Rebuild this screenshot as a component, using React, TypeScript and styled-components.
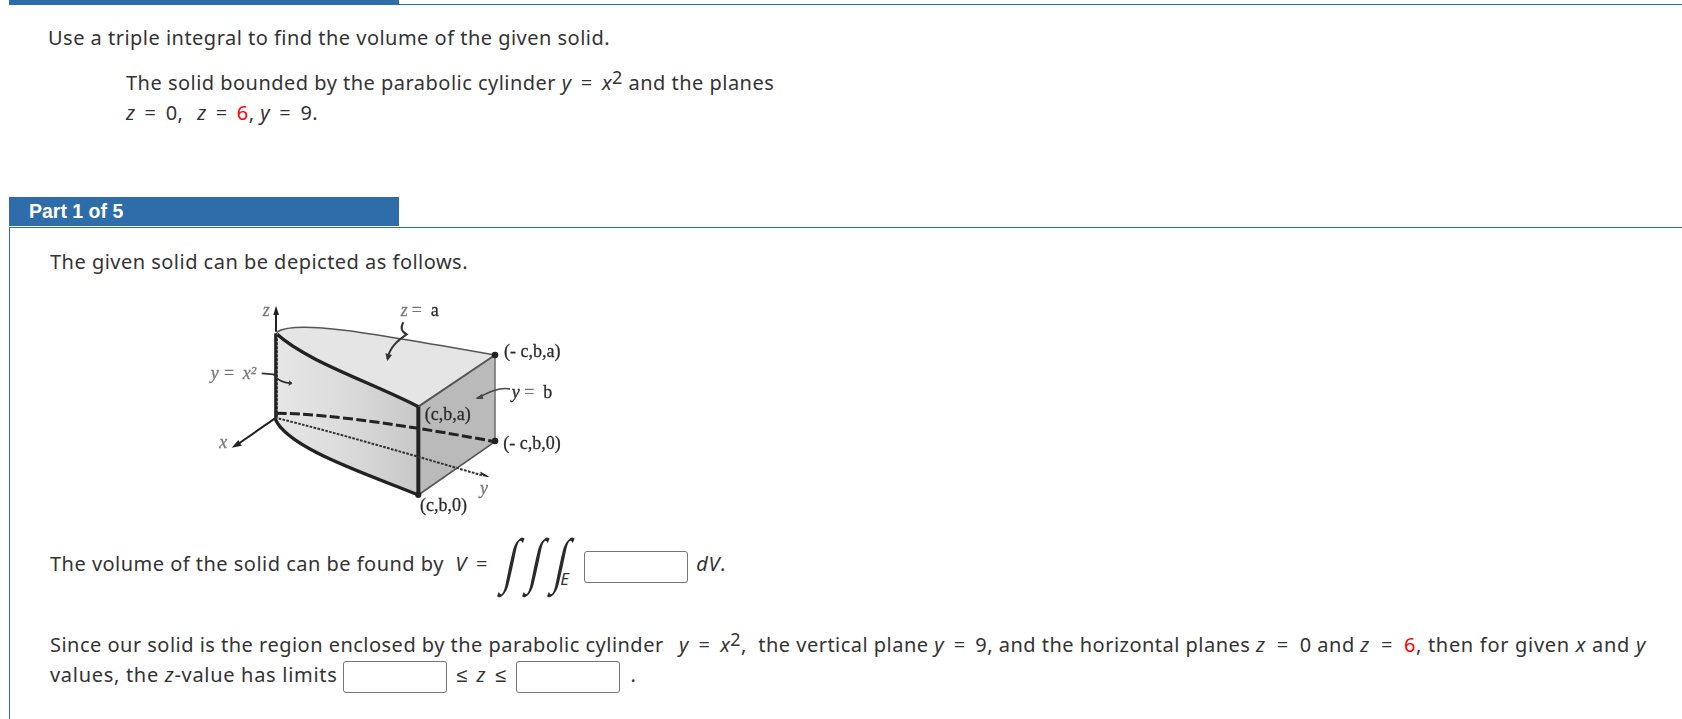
import styled, { createGlobalStyle } from 'styled-components';

const Blue = '#2e6da9';

const Global = createGlobalStyle`
  html, body { margin: 0; padding: 0; background: #fff; }
  body { font-family: "Noto Sans", Tahoma, sans-serif; font-size: 20px; letter-spacing: 0.48px; color: #333; overflow: hidden; }
`;

const Page = styled.div`
  padding-left: 9px;
  height: 719px;
  box-sizing: border-box;
`;

const Tab = styled.div<{ $top?: boolean }>`
  width: 390px;
  height: ${(p) => (p.$top ? '4px' : '29px')};
  box-sizing: border-box;
  padding-left: 20px;
  background: ${Blue};
  color: #fff;
  letter-spacing: 0;
  font: bold 19.5px/29px "Liberation Sans", Arial, sans-serif;
`;

const Rule = styled.div`
  height: 1px;
  background: ${Blue};
`;

const Prompt = styled.div`
  height: 192px;
  padding: 22px 0 0 39px;
  box-sizing: border-box;
`;

const Line = styled.div`
  line-height: 22px;
`;

const Problem = styled.div`
  margin: 19px 0 0 78px;
  line-height: 30px;
`;

const Power = styled.sup`
  font-size: 18px;
  line-height: 0;
  vertical-align: 6px;
`;

const Red = styled.span`
  color: #f00;
`;

const Op = styled.span<{ $gap?: number }>`
  margin: 0 ${(p) => p.$gap ?? 3.5}px;
`;

const Pause = styled.span<{ $size?: number }>`
  margin-right: ${(p) => p.$size ?? 8}px;
`;

const Part = styled.div`
  height: 492px;
  box-sizing: border-box;
  margin-top: 1px;
  padding: 23px 0 0 40px;
  border-top: 1px solid ${Blue};
  border-left: 1px solid ${Blue};
`;

const Figure = styled.svg`
  display: block;
  width: 400px;
  height: 245px;
  margin: 12px 0 0 140px;
`;

const Label = styled.text<{ $muted?: boolean; $italic?: boolean }>`
  font-family: "Liberation Serif", "Times New Roman", serif;
  font-size: 54px;
  letter-spacing: 0;
  font-style: ${(p) => (p.$italic ? 'italic' : 'normal')};
  fill: ${(p) => (p.$muted ? '#777' : '#2a2a2a')};
  stroke: ${(p) => (p.$muted ? '#777' : '#2a2a2a')};
  stroke-width: 0.8px;
`;

const Volume = styled.div`
  display: flex;
  align-items: flex-start;
  height: 62px;
  margin-top: 1px;
`;

const VolumeText = styled.div`
  line-height: 22px;
  margin-top: 22px;
`;

const Integrals = styled.div`
  position: relative;
  display: flex;
  width: 76px;
  height: 56px;
  margin: 0 8px 0 9px;
`;

const Integral = styled.span`
  width: 25px;
  text-align: center;
  font: italic 40px/56px "Liberation Serif", serif;
  color: #2a2a2a;
  transform: translateY(2px) skewX(-12deg) scaleY(1.52);
`;

const Sub = styled.span`
  position: absolute;
  left: 60px;
  top: 36px;
  font-size: 17px;
  font-style: italic;
`;

const Blank = styled.span<{ $inline?: boolean }>`
  display: ${(p) => (p.$inline ? 'inline-block' : 'block')};
  width: 104px;
  height: 32px;
  box-sizing: border-box;
  margin: ${(p) => (p.$inline ? '0' : '20px 8px 0 0')};
  vertical-align: middle;
  border: 1px solid #767676;
  border-radius: 3px;
  background: #fff;
`;

const Limits = styled.div`
  margin-top: 37px;
  line-height: 30px;
  white-space: nowrap;
`;

const Tail = styled.span`
  letter-spacing: 0.7px;
`;

const Bound = styled.span`
  display: inline-flex;
  gap: 9px;
  margin: 0 10px 0 9px;
`;

const Period = styled.span`
  margin-left: 10px;
`;

const Diagram = () => (
  <Figure viewBox="0 0 1200 735" role="img">
    <defs>
      <linearGradient id="side" x1="0" x2="1" y1="0" y2="0">
        <stop offset="0" stopColor="#e6e6e6" />
        <stop offset="0.45" stopColor="#dcdcdc" />
        <stop offset="1" stopColor="#c8c8c8" />
      </linearGradient>
      <filter id="soft" x="-5%" y="-5%" width="110%" height="110%">
        <feGaussianBlur stdDeviation="1.8" />
      </filter>
    </defs>
    <g filter="url(#soft)">
      <path d="M258 145 C300 105 520 140 915 210 L685 365 C540 290 350 230 258 145Z" fill="#e5e5e5" />
      <path d="M258 145 C350 230 540 290 685 365 L685 630 C540 570 290 490 258 400Z" fill="url(#side)" />
      <path d="M915 210 L915 470 L685 630 L685 365Z" fill="#bababa" />
      <path d="M262 140 C320 105 520 140 915 210" fill="none" stroke="#555" strokeWidth="5" />
      <path d="M915 210 L685 365" fill="none" stroke="#555" strokeWidth="6" />
      <path d="M915 210 L915 470" fill="none" stroke="#777" strokeWidth="5" />
      <path d="M915 470 L685 630" fill="none" stroke="#555" strokeWidth="5" />
      <path d="M258 145 C350 230 540 290 685 365" fill="none" stroke="#222" strokeWidth="10" />
      <path d="M255 400 C290 490 540 570 685 630" fill="none" stroke="#222" strokeWidth="10" />
      <path d="M685 365 L685 630" fill="none" stroke="#222" strokeWidth="12" />
      <path d="M258 145 L258 400" fill="none" stroke="#222" strokeWidth="11" />
      <path d="M258 145 L258 400" fill="none" stroke="#ddd" strokeWidth="3" strokeDasharray="3 9" transform="translate(4 0)" />
      <path d="M260 385 C420 385 700 430 915 470" fill="none" stroke="#222" strokeWidth="9" strokeDasharray="30 10" />
      <path d="M255 398 C430 440 700 520 880 572" fill="none" stroke="#333" strokeWidth="6" strokeDasharray="8 4" />
      <path d="M258 140 L258 75" stroke="#222" strokeWidth="6" />
      <path d="M258 62 L250 90 L267 90Z" fill="#222" />
      <path d="M255 400 L140 480" stroke="#222" strokeWidth="6" />
      <path d="M125 488 L145 465 L155 482Z" fill="#222" />
      <path d="M880 572 L895 575 L872 562Z" fill="#222" stroke="#222" strokeWidth="3" />
      <circle cx="915" cy="210" r="10" fill="#222" />
      <circle cx="915" cy="468" r="10" fill="#222" />
      <circle cx="685" cy="630" r="9" fill="#222" />
      <path d="M640 112 C630 130 635 140 650 148 C625 165 600 185 592 222" fill="none" stroke="#333" strokeWidth="6" />
      <path d="M586 205 L592 228 L606 210Z" fill="#333" />
      <path d="M215 265 L250 268 C262 285 280 295 305 295" fill="none" stroke="#333" strokeWidth="5" />
      <path d="M298 286 L307 295 L296 303Z" fill="#333" />
      <path d="M960 312 C925 305 890 325 860 340" fill="none" stroke="#444" strokeWidth="5" />
      <path d="M876 326 L858 342 L880 342Z" fill="#444" />
      <Label x="218" y="93" $muted $italic>z</Label>
      <Label x="632" y="93" $muted $italic>z</Label>
      <Label x="665" y="93" $muted>=</Label>
      <Label x="722" y="93">a</Label>
      <Label x="62" y="282" $muted $italic>y</Label>
      <Label x="102" y="282" $muted>=</Label>
      <Label x="158" y="282" $muted $italic>x²</Label>
      <Label x="88" y="490" $muted $italic>x</Label>
      <Label x="870" y="628" $muted $italic>y</Label>
      <Label x="965" y="338" $italic>y</Label>
      <Label x="1003" y="338" $muted>=</Label>
      <Label x="1060" y="338">b</Label>
      <Label x="942" y="216">(- c,b,a)</Label>
      <Label x="940" y="492">(- c,b,0)</Label>
      <Label x="704" y="406">(c,b,a)</Label>
      <Label x="690" y="678">(c,b,0)</Label>
    </g>
  </Figure>
);

export default function App() {
  return (
    <Page>
      <Global />
      <Tab $top />
      <Rule />
      <Prompt>
        <Line>Use a triple integral to find the volume of the given solid.</Line>
        <Problem>
          The solid bounded by the parabolic cylinder <i>y</i> <Op>=</Op> <i>x</i><Power>2</Power> and the planes
          <br />
          <i>z</i> <Op>=</Op> 0,<Pause /> <i>z</i> <Op>=</Op> <Red>6</Red>, <i>y</i> <Op>=</Op> 9.
        </Problem>
      </Prompt>
      <Tab>Part 1 of 5</Tab>
      <Part>
        <Line>The given solid can be depicted as follows.</Line>
        <Diagram />
        <Volume>
          <VolumeText>The volume of the solid can be found by&nbsp; <i>V</i> <Op>=</Op></VolumeText>
          <Integrals>
            <Integral>∫</Integral>
            <Integral>∫</Integral>
            <Integral>∫</Integral>
            <Sub>E</Sub>
          </Integrals>
          <Blank />
          <VolumeText><i>dV</i>.</VolumeText>
        </Volume>
        <Limits>
          Since our solid is the region enclosed by the parabolic cylinder&nbsp;<Pause $size={4} /> <i>y</i> <Op $gap={4}>=</Op> <i>x</i><Power>2</Power>,&nbsp; the vertical plane <i>y</i> <Op $gap={4}>=</Op> 9, and the horizontal planes <i>z</i> <Op $gap={5.5}>=</Op> 0 and <i>z</i> <Op $gap={5.5}>=</Op> <Red>6</Red><Tail>, then for given <i>x</i> and <i>y</i></Tail>
          <br />
          <Tail>values, the <i>z</i>-value has limits</Tail> <Blank $inline /><Bound><span>≤</span><i>z</i><span>≤</span></Bound><Blank $inline /><Period>.</Period>
        </Limits>
      </Part>
    </Page>
  );
}
